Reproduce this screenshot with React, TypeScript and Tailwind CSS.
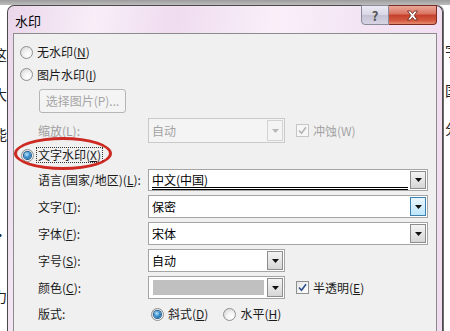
import React from "react";

const Radio = ({ checked }: { checked?: boolean }) => (
  <span className="flex w-[13px] h-[13px] shrink-0 items-center justify-center rounded-full border border-[#8e8f8f] bg-[radial-gradient(circle_at_65%_70%,#ffffff_0%,#f3f3f3_40%,#cfcfcf_100%)]">
    {checked && (
      <span className="w-[7px] h-[7px] rounded-full bg-[radial-gradient(circle_at_40%_35%,#bfe6fb_0%,#3d93d0_45%,#0d4c85_100%)] shadow-[0_0_0_1px_#1e5b93]" />
    )}
  </span>
);

const Check = ({ disabled }: { disabled?: boolean }) => (
  <span
    className={
      disabled
        ? "flex w-[13px] h-[13px] shrink-0 items-center justify-center border border-[#c6c6c6] bg-[#f6f6f6]"
        : "flex w-[13px] h-[13px] shrink-0 items-center justify-center border border-[#8e8f8f] bg-[linear-gradient(135deg,#e6e6e6,#ffffff)]"
    }
  >
    <svg width="9" height="9" viewBox="0 0 9 9">
      <path
        d="M1 4.5 L3.5 7.2 L8 1.2"
        fill="none"
        stroke={disabled ? "#b4b4b4" : "#2b4f8c"}
        strokeWidth="1.6"
      />
    </svg>
  </span>
);

const DropBtn = ({ blue, disabled }: { blue?: boolean; disabled?: boolean }) => (
  <span
    className={
      blue
        ? "flex w-[16px] h-full shrink-0 items-center justify-center border border-[#3c7fb1] bg-[linear-gradient(#eaf6fd,#bee6fd)]"
        : disabled
        ? "flex w-[16px] h-full shrink-0 items-center justify-center border border-[#d3d3d3] bg-[#f4f4f4]"
        : "flex w-[16px] h-full shrink-0 items-center justify-center border border-[#8d8d8d] bg-[linear-gradient(#f4f4f4,#d6d6d6)]"
    }
  >
    <svg width="7" height="4" viewBox="0 0 7 4">
      <path d="M0 0 H7 L3.5 4 Z" fill={disabled ? "#b8b8b8" : "#111"} />
    </svg>
  </span>
);

const Combo = ({
  value,
  short,
  blue,
  disabled,
  underline,
  h = "h-[23px]",
}: {
  value: string;
  short?: boolean;
  blue?: boolean;
  disabled?: boolean;
  underline?: boolean;
  h?: string;
}) => (
  <div
    className={`${short ? "w-[137px]" : "w-[280px]"} ${h} flex items-stretch border p-px ${
      disabled ? "border-[#c9c9c9] bg-[#f4f4f4]" : "border-[#a5a5a5] bg-white"
    }`}
  >
    <div className="flex-1 flex items-center pl-[2px] pr-[2px]">
      <span
        className={`${underline ? "flex-1 border-b-[3px] border-double border-black leading-[15px] mt-[1px]" : ""} ${
          disabled ? "text-[#a3a3a3]" : "text-black"
        }`}
      >
        {value}
      </span>
    </div>
    <DropBtn blue={blue} disabled={disabled} />
  </div>
);

const FieldRow = ({ label, children, mt = "mt-[4px]" }: { label: React.ReactNode; children: React.ReactNode; mt?: string }) => (
  <div className={`${mt} flex items-center pl-[24px]`}>
    <span className="w-[110px] shrink-0 text-[#1b1b1b]">{label}</span>
    {children}
  </div>
);

const docLeft = [
  { ch: "这", mt: "mt-[42px]" },
  { ch: "大", mt: "mt-[26px]" },
  { ch: "能", mt: "mt-[26px]" },
  { ch: "›", mt: "mt-[32px]" },
  { ch: "·", mt: "mt-[40px]" },
  { ch: "力", mt: "mt-[48px]" },
];

const docRight = [
  { ch: "字", mt: "mt-[38px]" },
  { ch: "国", mt: "mt-[26px]" },
  { ch: "分", mt: "mt-[24px]" },
];

export default function App() {
  return (
    <div className="w-[450px] h-[331px] overflow-hidden bg-white flex flex-col text-[12px] [font-family:'Microsoft_YaHei','Noto_Sans_CJK_SC',sans-serif]">
      <div className="h-[5px] shrink-0 bg-[linear-gradient(#9c9c9c,#bdbdbd)]" />
      <div className="flex flex-1 min-h-0">
        {/* document behind, left edge */}
        <div className="w-[7px] shrink-0 overflow-hidden flex flex-col text-[14px] leading-[14px] text-[#222]">
          {docLeft.map((d) => (
            <span key={d.ch} className={`${d.mt} -ml-[7px] w-[14px]`}>
              {d.ch}
            </span>
          ))}
        </div>

        {/* dialog window */}
        <div className="w-[436px] shrink-0 flex flex-col border border-b-0 border-[#4a4a4a] rounded-t-[7px] bg-[linear-gradient(100deg,#ead6ea_0%,#f8eef8_18%,#efdcef_34%,#f9eff9_55%,#f3e3f3_75%,#f0dcf0_100%)] shadow-[1px_0_0_#6b6b6b]">
          <div className="h-[27px] shrink-0 flex items-start">
            <span className="self-center ml-[7px] mt-[2px] text-[13px] text-black">水印</span>
            <div className="ml-auto mr-[5px] -mt-px flex">
              <span className="w-[28px] h-[20px] flex items-center justify-center rounded-bl-[4px] border border-[#8a8a9a] bg-[linear-gradient(#eceaf4,#d8d6e4_50%,#c3c1d3_51%,#d7d5e4)] text-[13px] font-bold text-[#555] leading-none">
                ?
              </span>
              <span className="w-[48px] h-[20px] flex items-center justify-center rounded-br-[4px] border border-l-0 border-[#7a2a20] bg-[linear-gradient(#eaa899,#d9725f_45%,#c43f2b_50%,#d4583f_80%,#e58c70)]">
                <svg width="13" height="11" viewBox="0 0 13 11">
                  <path
                    d="M1.5 1 H4.5 L6.5 3.6 L8.5 1 H11.5 L8.2 5.5 L11.5 10 H8.5 L6.5 7.4 L4.5 10 H1.5 L4.8 5.5 Z"
                    fill="#ffffff"
                    stroke="#5a1a12"
                    strokeWidth="0.8"
                  />
                </svg>
              </span>
            </div>
          </div>

          {/* client area */}
          <div className="mx-[5px] flex-1 min-h-0 border border-b-0 border-[#8c8c8c] bg-[#f0f0f0] flex flex-col relative">
            <div className="mt-[7px] h-[22px] flex items-center gap-[4px] pl-[6px] text-[#1b1b1b]">
              <Radio />
              <span>
                无水印(<u>N</u>)
              </span>
            </div>
            <div className="h-[23px] flex items-center gap-[4px] pl-[6px] text-[#1b1b1b]">
              <Radio />
              <span>
                图片水印(<u>I</u>)
              </span>
            </div>
            <div className="mt-[3px] ml-[25px] w-[87px] h-[24px] flex items-center justify-center rounded-[3px] border border-[#b5b5b5] bg-[#f4f4f4] text-[#a6a6a6]">
              选择图片(P)...
            </div>
            <div className="mt-[5px] flex items-center pl-[24px]">
              <span className="w-[110px] shrink-0 text-[#9d9d9d]">缩放(L):</span>
              <Combo value="自动" short disabled h="h-[25px]" />
              <span className="ml-[11px] flex items-center gap-[4px] text-[#a3a3a3]">
                <Check disabled />
                <span>冲蚀(W)</span>
              </span>
            </div>
            <div className="mt-px h-[22px] flex items-center gap-[3px] pl-[7px] text-[#1b1b1b]">
              <Radio checked />
              <span className="px-[1px] outline-1 outline-dotted outline-[#333] leading-[14px]">
                文字水印(<u>X</u>)
              </span>
            </div>
            <FieldRow mt="mt-[3px]" label={<>语言(国家/地区)(<u>L</u>):</>}>
              <Combo value="中文(中国)" underline h="h-[22px]" />
            </FieldRow>
            <FieldRow label={<>文字(<u>T</u>):</>}>
              <Combo value="保密" blue />
            </FieldRow>
            <FieldRow label={<>字体(<u>F</u>):</>}>
              <Combo value="宋体" />
            </FieldRow>
            <FieldRow label={<>字号(<u>S</u>):</>}>
              <Combo value="自动" short />
            </FieldRow>
            <FieldRow label={<>颜色(<u>C</u>):</>}>
              <div className="w-[137px] h-[23px] flex items-stretch border border-[#a5a5a5] bg-white p-px">
                <div className="flex-1 py-[2px] pl-[3px] pr-[3px]">
                  <div className="h-full bg-[#c0c0c0]" />
                </div>
                <DropBtn />
              </div>
              <span className="ml-[11px] flex items-center gap-[4px] text-[#1b1b1b]">
                <Check />
                <span>
                  半透明(<u>E</u>)
                </span>
              </span>
            </FieldRow>
            <FieldRow mt="mt-[4px]" label="版式:">
              <div className="h-[22px] flex items-center text-[#1b1b1b]">
                <span className="ml-[3px] flex items-center gap-[4px]">
                  <Radio checked />
                  <span>
                    斜式(<u>D</u>)
                  </span>
                </span>
                <span className="ml-[15px] flex items-center gap-[4px]">
                  <Radio />
                  <span>
                    水平(<u>H</u>)
                  </span>
                </span>
              </div>
            </FieldRow>

            {/* red annotation ellipse */}
            <div className="absolute left-[0px] top-[103px] w-[98px] h-[33px] rounded-[50%] border-[3px] border-[#cc2a22]" />
          </div>
        </div>

        {/* document behind, right edge */}
        <div className="flex-1 overflow-hidden flex flex-col text-[14px] leading-[14px] text-[#222] pl-[2px]">
          {docRight.map((d) => (
            <span key={d.ch} className={`${d.mt} w-[14px]`}>
              {d.ch}
            </span>
          ))}
        </div>
      </div>
    </div>
  );
}
